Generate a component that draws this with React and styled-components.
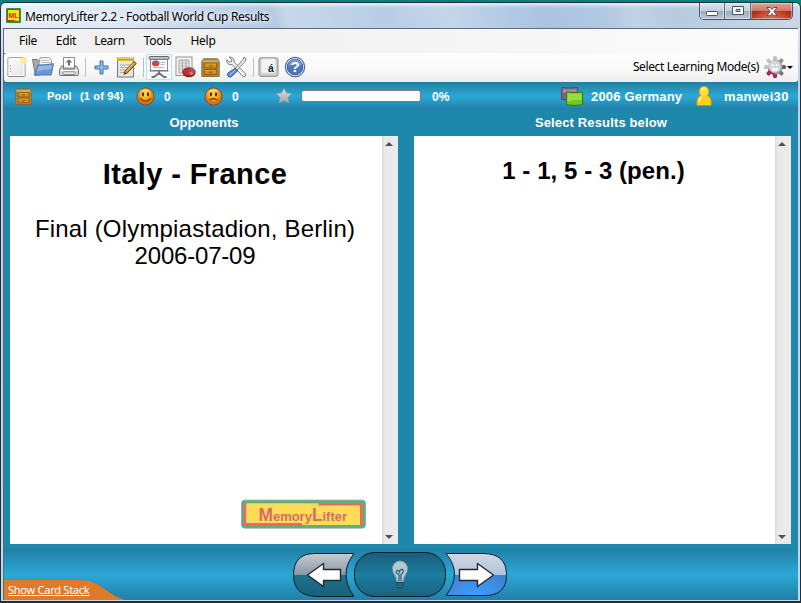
import React from "react";
import styled, { createGlobalStyle } from "styled-components";

const Global = createGlobalStyle`
  * { box-sizing: border-box; }
  html, body { margin: 0; padding: 0; width: 801px; height: 603px; overflow: hidden; background: #087872; }
  svg { display: block; flex: none; overflow: visible; }
`;

const Desktop = styled.div`
  width: 801px;
  height: 603px;
  padding-top: 2px;
  background: #08807b;
`;
const Frame = styled.div`
  width: 801px;
  height: 601px;
  display: flex;
  flex-direction: column;
  border: 1px solid #202f3a;
  border-top-width: 1px;
  border-bottom-width: 2px;
  border-radius: 6px 6px 0 0;
  padding: 0 2px 1px 2px;
  background: linear-gradient(#e8f0f8 0, #bed1e7 80px, #c2d7ea 100%);
  overflow: hidden;
`;
const TitleBar = styled.header`
  height: 25px;
  flex: none;
  display: flex;
  align-items: flex-start;
  margin: 0 -2px;
  padding-left: 5px;
  background:
    linear-gradient(rgba(255,255,255,.65) 0, rgba(255,255,255,0) 5px),
    linear-gradient(75deg, #e7eff8 0, #dce8f4 15%, #bed1e8 27%, #b3c9e3 34%, #c6d8ea 36%, #b8cde6 48%, #c3d5ea 56%, #a9c3e0 68%, #b1c8e2 75%, #bfd2e6 79%, #b7cbe1 84%, #cbd8e6 100%);
`;
const TitleIcon = styled.div`margin: 5px 4px 0 0;`;
const Title = styled.div`
  flex: 1;
  padding-top: 5px;
  font: 12px/17px "Noto Sans", "Open Sans", sans-serif;
  letter-spacing: ${(p) => p.$ls || 0}px;
  color: #000;
  white-space: nowrap;
  text-shadow: 0 0 5px #fff, 0 0 7px #fff;
`;
const CaptionButtons = styled.div`
  display: flex;
  height: 17px;
  margin-right: 7px;
  border: 1px solid #46566a;
  border-top: 0;
  border-radius: 0 0 5px 5px;
  overflow: hidden;
`;
const CaptionButton = styled.div`
  width: ${(p) => p.$w}px;
  display: flex;
  justify-content: center;
  padding-top: ${(p) => p.$top}px;
  border-right: ${(p) => (p.$danger ? "0" : "1px solid #56687d")};
  box-shadow: inset 0 0 0 1px rgba(255,255,255,.4);
  background: ${(p) =>
    p.$danger
      ? "radial-gradient(ellipse at 50% 110%, #df7653 0, transparent 65%), linear-gradient(#dfa398 0, #cc7768 47%, #ad2817 50%, #bd4328 100%)"
      : "linear-gradient(#dce4ed 0, #c2cfdd 47%, #9babbd 50%, #bac9d9 100%)"};
`;
const Client = styled.main`
  flex: 1;
  min-height: 0;
  display: flex;
  flex-direction: column;
  border: 1px solid #5e6b7c;
  border-bottom: 0;
  border-right: 0;
  background: #1d87ac;
`;
const MenuBar = styled.nav`
  height: 24px;
  flex: none;
  display: flex;
  background: linear-gradient(90deg, #f0f0f0, #f3f3f3 40%, #fcfcfc);
`;
const MenuItem = styled.div`
  width: ${(p) => p.$w}px;
  padding-top: 3px;
  font: 12px/17px "Noto Sans", "Open Sans", sans-serif;
  letter-spacing: -0.3px;
  text-align: center;
  color: #000;
`;
const ToolBar = styled.div`
  height: 29px;
  flex: none;
  display: flex;
  align-items: flex-start;
  background: linear-gradient(#fcfcfc 0, #f9f9f9 55%, #eeeeee 100%);
  border-radius: 3px 0 3px 3px;
`;
const Tool = styled.div`
  width: ${(p) => p.$w}px;
  height: 26px;
  margin: 1px 0 0 ${(p) => p.$gap || 0}px;
  display: flex;
  align-items: center;
  justify-content: center;
  flex: none;
  border: ${(p) => (p.$active ? "1px solid #b9e0f5" : "0")};
  background: ${(p) => (p.$active ? "#f5fafd" : "transparent")};
`;
const Separator = styled.div`
  width: 1px;
  height: 19px;
  margin: 5px 0 0 ${(p) => p.$gap}px;
  background: #bdbdbd;
`;
const ModeLabel = styled.div`
  margin-left: auto;
  padding-top: 5px;
  font: 12px/17px "Noto Sans", "Open Sans", sans-serif;
  letter-spacing: -0.38px;
  white-space: nowrap;
`;
const Caret = styled.div`
  margin: 13px 5px 0 1px;
  border: 3px solid transparent;
  border-top-color: #000;
  border-bottom: 0;
`;
const StatusBar = styled.div`
  height: 28px;
  flex: none;
  display: flex;
  align-items: center;
  background: linear-gradient(#237ea5 0, #2ba8d6 50%, #237fa7 100%);
`;
const StatusIcon = styled.div`
  width: ${(p) => p.$w}px;
  margin-left: ${(p) => p.$gap || 0}px;
  flex: none;
`;
const StatusText = styled.div`
  width: ${(p) => p.$w}px;
  margin-left: ${(p) => p.$gap || 0}px;
  padding-top: ${(p) => p.$drop || 0}px;
  flex: none;
  white-space: nowrap;
  color: #fff;
  font: bold ${(p) => p.$size || 12}px/16px "Liberation Sans", Arial, sans-serif;
  letter-spacing: ${(p) => p.$ls || 0}px;
`;
const Progress = styled.div`
  width: 120px;
  height: 12px;
  margin-left: 9px;
  border: 1px solid #7b7b7b;
  border-radius: 3px;
  background: #fff;
`;
const Spacer = styled.div`flex: 1;`;
const Cards = styled.section`
  flex: none;
  height: 434px;
  display: grid;
  grid-template-columns: 388px 377px;
  column-gap: 16px;
  padding-left: 6px;
`;
const Card = styled.article`
  display: flex;
  flex-direction: column;
`;
const CardHeader = styled.h2`
  height: 26px;
  margin: 0;
  padding-top: 4px;
  text-align: center;
  color: #fff;
  font: bold 13px/17px "Liberation Sans", Arial, sans-serif;
  letter-spacing: ${(p) => p.$ls || 0}px;
  padding-right: ${(p) => p.$shift || 0}px;
`;
const CardBody = styled.div`
  height: 408px;
  display: flex;
  background: #fff;
`;
const CardContent = styled.div`
  flex: 1;
  display: flex;
  flex-direction: column;
  align-items: center;
  padding-right: 2px;
  font-family: "Liberation Sans", Arial, sans-serif;
  color: #000;
`;
const Question = styled.div`
  margin-top: ${(p) => p.$top}px;
  font-weight: bold;
  font-size: ${(p) => p.$size}px;
  line-height: 34px;
  letter-spacing: ${(p) => p.$ls || 0}px;
  white-space: nowrap;
`;
const Detail = styled.div`
  margin-top: 24px;
  text-align: center;
`;
const DetailLine = styled.div`
  font-size: 24px;
  line-height: 27px;
  letter-spacing: ${(p) => p.$ls}px;
  white-space: nowrap;
`;
const LogoSlot = styled.div`
  margin: auto 14px 15px 0;
  align-self: flex-end;
`;
const ScrollTrack = styled.div`
  width: 16px;
  display: flex;
  flex-direction: column;
  justify-content: space-between;
  align-items: center;
  padding: 6px 2px 5px 0;
  background: linear-gradient(90deg, #dcdcdc 0, #e9e9e9 3px, #ebebeb 100%);
`;
const ScrollArrow = styled.div`
  border: 4px solid transparent;
  ${(p) => (p.$up ? "border-bottom-color: #505050; border-top: 0;" : "border-top-color: #505050; border-bottom: 0;")}
`;
const Footer = styled.footer`
  flex: 1;
  margin-top: 5px;
  display: grid;
  grid-template-columns: 289px 215px 1fr;
  background: linear-gradient(#237fa6 0, #2aa8d5 50%, #237fa7 100%);
`;
const StackTab = styled.div`
  align-self: end;
  width: 121px;
  height: 20px;
  display: flex;
  padding: 1px 0 0 4px;
  background: #e07a28;
  clip-path: polygon(0 0, 75px 0, 85px 1px, 93px 4px, 102px 10px, 111px 16px, 121px 20px, 0 20px);
`;
const StackLink = styled.a`
  color: #fff;
  text-decoration: underline;
  white-space: nowrap;
  letter-spacing: -0.25px;
  font: 11px/17px "Noto Sans", Tahoma, sans-serif;
`;

const MLIcon = () => (
  <svg width="15" height="15" viewBox="0 0 15 15">
    <rect width="15" height="15" rx="1" fill="#2a9c3c" />
    <rect x="1.3" y="1.3" width="12.4" height="12.4" fill="#cb2b16" />
    <path d="M2 2h11v11H8.5v-1H2z" fill="#ffe01c" />
    <text x="7.5" y="10.2" textAnchor="middle" textLength="10" fontSize="7" fontWeight="bold" fontFamily="Liberation Sans" fill="#d62d10">ML</text>
  </svg>
);
const NewIcon = () => (
  <svg width="20" height="20" viewBox="0 0 20 20">
    <defs><linearGradient id="paper" x2="1" y2="1"><stop stopColor="#fff" /><stop offset="1" stopColor="#e2e2e2" /></linearGradient></defs>
    <rect x="1" y=".8" width="17" height="18.7" rx="1" fill="url(#paper)" stroke="#858585" />
    <rect x="2" y="1.8" width="15" height="16.7" fill="none" stroke="#fff" />
    <path d="M3.5 8v1M3.5 11v1M3.5 14v1" stroke="#888" />
    <circle cx="16.5" cy="3.8" r="3.6" fill="#fff59b" opacity=".8" />
    <circle cx="16.5" cy="3.8" r="2" fill="#fffde0" stroke="#f0dc50" />
  </svg>
);
const OpenIcon = () => (
  <svg width="22" height="20" viewBox="0 0 22 20">
    <path d="M.5 2.5h5l1 2h9v12l-12 2z" fill="#a9a9a9" stroke="#777" />
    <path d="M8 .8l8.5-.3 3 2.5v9H6z" fill="#f8f8f8" stroke="#999" />
    <path d="M9 3.5h8M9 5.5h9" stroke="#bbb" />
    <path d="M6 8q8 0 15.5-1.3L19.2 18H2.2z" fill="#6f97cf" stroke="#4d79b5" />
    <path d="M6.5 9q7 0 13.7-1l-.8 4Q11 12 5 14.5z" fill="#a8c4e8" opacity=".7" />
  </svg>
);
const PrintIcon = () => (
  <svg width="20" height="20" viewBox="0 0 20 20">
    <path d="M4.5.5h11V11h-11z" fill="#fff" stroke="#8b8b8b" />
    <path d="M10 2.2L6.7 5.6H9v3h2v-3h2.3z" fill="#6c6c6c" />
    <path d="M2.5 9h2v3h11V9h2l2 4v4.5q0 1-1 1h-17q-1 0-1-1V13z" fill="#d7d7d7" stroke="#727272" />
    <path d="M1 13.5h18" stroke="#fff" />
    <rect x="4" y="14.8" width="12" height="2.7" rx="1" fill="#eee" stroke="#8b8b8b" />
  </svg>
);
const PlusIcon = () => (
  <svg width="15" height="15" viewBox="0 0 15 15">
    <path d="M6 1h3v5h5v3H9v5H6V9H1V6h5z" fill="#91b6e2" stroke="#3971b4" strokeLinejoin="round" />
  </svg>
);
const NoteIcon = () => (
  <svg width="21" height="21" viewBox="0 0 21 21">
    <rect x="1.5" y="2.5" width="16" height="17.5" fill="#e6e6e3" stroke="#777" />
    <path d="M4 8h11M4 10.5h9M4 13h7M4 15.5h6" stroke="#aaa" />
    <path d="M1 1.2h17" stroke="#dbb01a" strokeWidth="2.4" strokeDasharray="1.5 .8" />
    <path d="M1 3.3h17" stroke="#e2b62a" strokeWidth="1.6" />
    <path d="M18 4.5l2.3 2-9 9.5-3.3 1.4 1-3.3z" fill="#d69028" stroke="#6d471b" />
    <path d="M17.6 6l-7 8" stroke="#ffcd70" /><path d="M8 17.4l2-1-1-1z" fill="#222" />
  </svg>
);
const PresentIcon = () => (
  <svg width="22" height="24" viewBox="0 0 22 24">
    <rect x="2.5" y="3" width="17" height="12.5" fill="#fff" stroke="#888" />
    <rect x="1" y="1.5" width="20" height="2.8" rx="1" fill="#c6c6c6" stroke="#676767" />
    <ellipse cx="7.7" cy="8.4" rx="3.7" ry="2.8" fill="#d6403c" /><path d="M7.7 8.5V5.4q4 .3 3.7 3.1z" fill="#3b80c0" />
    <path d="M12.5 7.5h5M12.5 9.5h4M5 12.5h11" stroke="#b8b8b8" />
    <path d="M11 16v3M11 18l-5 4H3.5M11 18l5 4h2.5" stroke="#737373" strokeWidth="2" fill="none" />
    <path d="M1.5 16h19" stroke="#777" />
  </svg>
);
const ReportIcon = () => (
  <svg width="21" height="22" viewBox="0 0 21 22">
    <rect x="1" y="1" width="16" height="18.5" fill="#f8f8f8" stroke="#929292" />
    <rect x="4" y="4" width="10" height="13" fill="#e4e4e4" stroke="#a5a5a5" />
    <path d="M4 7h10M4 10h10M4 13h10" stroke="#c5c5c5" /><path d="M7.5 4v13M11 4v13" stroke="#a5a5a5" />
    <ellipse cx="14" cy="17.2" rx="6.3" ry="4" fill="#8f1c23" /><ellipse cx="14" cy="15.7" rx="6.3" ry="4" fill="#c92c30" stroke="#8f1c23" strokeWidth=".7" />
    <path d="M14.2 15.5l2.2-3.2q3.5 1 3.5 3.4z" fill="#5579a9" /><path d="M14.2 15.7l5.2 1.2q-1.5 2-4.2 2.2z" fill="#d98747" />
  </svg>
);
const DrawerIcon = ({ size = 19 }) => (
  <svg width={size} height={size} viewBox="0 0 19 19">
    <path d="M.8 18.4V3.2L2.6.8h13.8l1.8 2.4v15.2z" fill="#b08a47" stroke="#7f6431" strokeWidth=".9" />
    <path d="M1.5 3.2h16" stroke="#dabb7e" strokeWidth="1.3" />
    <path d="M3.3 5.2h12.4v4.8H3.3zM3.3 11.6h12.4v4.8H3.3z" fill="#dc8d12" stroke="#765117" strokeWidth=".8" />
    <path d="M4 6h11M4 12.4h11" stroke="#eba732" strokeWidth=".8" />
    <path d="M8 7.8h3M8 14.2h3" stroke="#7d5011" strokeWidth="1" />
  </svg>
);
const ToolsIcon = () => (
  <svg width="21" height="22" viewBox="0 0 21 22">
    <path d="M3 1l3 3-.6 1.7L3.5 6 .8 3.7Q.3 7 2.5 8.2q2 1 3.6.2l10 11.3q1.4 1.5 3 .5 1.4-1.4 0-2.8L8.3 6.5Q8.5 1 3 1z" fill="#f0f0f0" stroke="#777" />
    <path d="M18 1l2 2-1 2.5L11 14l-1.5-1.5L17 3.5z" fill="#efefef" stroke="#777" />
    <path d="M9 12.5l2.5 2.3-6 5.8q-1.6 1-3.3-.3-1.4-1.8-.2-3.3z" fill="#608ed0" stroke="#244f93" />
    <path d="M9.3 14l-5.8 5" stroke="#b5d2f3" />
  </svg>
);
const KeyIcon = () => (
  <svg width="21" height="20" viewBox="0 0 21 20">
    <rect x="1" y=".8" width="19" height="18.5" rx="2" fill="#cecece" stroke="#8b8b8b" />
    <rect x="3.5" y="2" width="14" height="14" rx="1.5" fill="#f3f3f1" stroke="#e2e2e2" />
    <text x="13" y="14.5" textAnchor="middle" fontSize="10.5" fontWeight="bold" fontFamily="Liberation Sans" fill="#222">á</text>
  </svg>
);
const HelpIcon = () => (
  <svg width="22" height="22" viewBox="0 0 22 22">
    <circle cx="11" cy="11" r="9.7" fill="#f5f8fd" stroke="#506f99" strokeWidth="1.2" />
    <circle cx="11" cy="11" r="7.8" fill="#4e78b8" stroke="#315c9d" />
    <path d="M4 10a7 7 0 0 1 14 0q-7-2-14 0z" fill="#83a7d7" opacity=".7" />
    <text x="11" y="16.2" textAnchor="middle" fontSize="15" fontWeight="bold" fontFamily="Liberation Sans" fill="#fff">?</text>
  </svg>
);
const gearTeeth = ["#c4c4c4", "#959595", "#5e5e5e", "#777", "#9e2761", "#9e2761", "#c0c0c0", "#c4c4c4"];
const ModeIcon = () => (
  <svg width="22" height="22" viewBox="0 0 22 22">
    {gearTeeth.map((fill, i) => (
      <rect key={i} x="9" y="0" width="4" height="5" rx="1.6" transform={`rotate(${i * 45} 11 11)`} fill={fill} />
    ))}
    <path d="M4 13l7-2v8q-5 0-7-6z" fill="#9e2761" /><path d="M11 3.5q7.5 1 7.5 7.5T11 18.5z" fill="#909090" />
    <circle cx="11" cy="10.6" r="6.2" fill="#d6d6d6" stroke="#bbb" />
    <circle cx="8.8" cy="9" r="1" fill="#fff" /><circle cx="13" cy="9" r="1" fill="#fff" />
    <path d="M7.5 12q3.5 1.4 7 0-1 3-3.5 3T7.5 12z" fill="#fff" />
  </svg>
);
const Face = ({ sad }) => (
  <svg width="19" height="19" viewBox="0 0 19 19">
    <defs><radialGradient id={sad ? "sadFace" : "happyFace"} cx="48%" cy="36%">
      <stop offset="0" stopColor="#ffd94a" /><stop offset=".55" stopColor="#fbab22" /><stop offset="1" stopColor="#d8730c" />
    </radialGradient></defs>
    <circle cx="9.5" cy="9.5" r="8.6" fill={`url(#${sad ? "sadFace" : "happyFace"})`} stroke="#7a421a" strokeWidth=".8" />
    <path d="M3.5 5.5q6-6.5 12 0-6-2.5-12 0z" fill="#fff2a6" opacity=".7" />
    <ellipse cx="7" cy="7.3" rx="1" ry="2.1" fill="#3c2308" /><ellipse cx="12" cy="7.3" rx="1" ry="2.1" fill="#3c2308" />
    <path d={sad ? "M5.5 13q4-2.8 8 0" : "M4.3 11.3q5.2 5.4 10.4 0"} fill="none" stroke="#542905" strokeWidth="1.2" />
  </svg>
);
const StarIcon = () => (
  <svg width="16" height="16" viewBox="0 0 16 16">
    <defs><linearGradient id="star" y2="1" x2="0"><stop stopColor="#e0e0e0" /><stop offset="1" stopColor="#a4a4a4" /></linearGradient></defs>
    <path d="M8 .5l2.4 4.6 5.1.6-3.7 3.8 1.1 5.6L8 12.7l-4.9 2.4 1.1-5.6L.5 5.7l5.1-.6z" fill="url(#star)" stroke="#a0a0a0" strokeWidth=".5" />
  </svg>
);
const DeckIcon = () => (
  <svg width="22" height="20" viewBox="0 0 22 20">
    <path d="M.7 1.5q8 1 16 0v12q-8 1-16 0z" fill="#806380" stroke="#574964" />
    <path d="M2 2.7q7 1 13.5 0v3q-7 1-13.5 1z" fill="#a58ba2" />
    <path d="M5.5 6q7 1 16 0v12.8q-8 1-16 0z" fill="#6fcd1f" stroke="#397711" />
    <path d="M6.5 7.2q7 1 14 0V14q-7-1-14 2z" fill="#96df43" />
  </svg>
);
const UserIcon = () => (
  <svg width="16" height="20" viewBox="0 0 16 20">
    <path d="M.8 17.3q-.2-6 3.9-8.3h6.6q4.1 2.3 3.9 8.3v1.2q0 1-1 1H1.8q-1 0-1-1z" fill="#ffd018" stroke="#d78b00" />
    <ellipse cx="8" cy="5.5" rx="4.8" ry="5.1" fill="#ffe23b" stroke="#e29c05" />
    <path d="M4.8 9.2h6.4v1.6H4.8z" fill="#ffd424" />
    <path d="M5.8 4q1-3 4.2-1.2M3 16q.5-4 3-5" stroke="#fff4a0" strokeWidth="1.5" fill="none" />
  </svg>
);
const BrandLogo = () => (
  <svg width="125" height="29" viewBox="0 0 125 29">
    <rect x=".7" y=".2" width="123.6" height="27.9" rx="3" fill="#54b37d" stroke="#80a48c" />
    <rect x="3" y="3.3" width="118.3" height="21.7" fill="#ffdc58" />
    <path d="M3.9 3v21.2h57M77.5 4.2h42.8V26" fill="none" stroke="#ed6666" strokeWidth="2.6" strokeLinejoin="round" />
    <text x="17.5" y="20.8" textLength="88.5" lengthAdjust="spacingAndGlyphs" fontFamily="Liberation Sans" fontWeight="bold" fill="#d96c68" fontSize="13.5">
      <tspan fontSize="18">M</tspan>emory<tspan fontSize="18">L</tspan>ifter
    </text>
  </svg>
);
const Navigation = () => (
  <svg width="215" height="51" viewBox="0 0 215 51">
    <defs>
      <linearGradient id="prev" x2="0" y2="1"><stop stopColor="#c5ccd4" /><stop offset=".5" stopColor="#8798a3" /><stop offset=".51" stopColor="#1d718e" /><stop offset="1" stopColor="#18617b" /></linearGradient>
      <linearGradient id="next" x2="0" y2="1"><stop stopColor="#d1d6df" /><stop offset=".5" stopColor="#afc5e1" /><stop offset=".51" stopColor="#418ce2" stopOpacity="0" /><stop offset="1" stopColor="#3994ee" stopOpacity="0" /></linearGradient>
      <radialGradient id="glow" cx=".5" cy="1" r=".6"><stop stopColor="#3f9cff" /><stop offset="1" stopColor="#3f83d0" /></radialGradient>
      <linearGradient id="mid" x2="0" y2="1"><stop stopColor="#195d7a" /><stop offset=".5" stopColor="#1b7c9f" /><stop offset="1" stopColor="#196380" /></linearGradient>
    </defs>
    <path d="M22 4.5h39Q45 25 61 47.5H25Q.5 47.5.5 26T22 4.5z" fill="url(#prev)" stroke="#101b24" />
    <rect x="61.5" y="3.5" width="91" height="44" rx="20" fill="url(#mid)" stroke="#071e2b" />
    <path d="M153 4.5h37q23.5 0 23.5 21.5T190 46.5h-37q17-22 0-42z" fill="url(#glow)" />
    <path d="M153 4.5h37q23.5 0 23.5 21.5T190 46.5h-37q17-22 0-42z" fill="url(#next)" stroke="#14212e" />
    <path d="M14.5 26l16-11.5v6h17v11h-17v6z" fill="#fff" stroke="#272727" strokeWidth="1.4" strokeLinejoin="round" />
    <path d="M200.5 26l-16-11.5v6h-18v11h18v6z" fill="#fff" stroke="#272727" strokeWidth="1.4" strokeLinejoin="round" />
    <path d="M99.5 19.5a7.5 7.5 0 1 1 15 0q0 4-2.5 7-1.5 2-1.5 6h-7q0-4-1.5-6-2.5-3-2.5-7z" fill="#b6c8d1" stroke="#839ea9" strokeWidth=".6" />
    <path d="M106 32v-6.5q-3.5-1-2.7-3.2 1.7-2 3.2.7.5-3 2.8-2.7 2.7 2-1.3 5.2V32" stroke="#1a6079" fill="none" strokeWidth="1.2" />
    <path d="M103 33h8v5l-2 1.5h-4L103 38z" fill="#194f64" /><path d="M103.5 35h7M103.5 37.3h7" stroke="#55879a" strokeWidth=".7" />
  </svg>
);
const MinGlyph = () => <svg width="12" height="5"><rect x=".5" y=".5" width="11" height="4" rx="1" fill="#fff" stroke="#4b5360" /></svg>;
const MaxGlyph = () => <svg width="12" height="10"><path fillRule="evenodd" d="M.5.5h11v8H.5zM4 3.5h4v2H4z" fill="#fff" stroke="#4b5360" /></svg>;
const CloseGlyph = () => <svg width="12" height="10"><path d="M1 .5h3.2L6 2.5 7.8.5H11L7.8 4.5 11 8.7H7.8L6 6.5 4.2 8.7H1l3.2-4.2z" fill="#fff" stroke="#5a3f47" strokeWidth=".9" /></svg>;

const Scrollbar = () => (
  <ScrollTrack>
    <ScrollArrow $up />
    <ScrollArrow />
  </ScrollTrack>
);

export default function App() {
  return (
    <Desktop>
      <Global />
      <Frame>
        <TitleBar>
          <TitleIcon><MLIcon /></TitleIcon>
          <Title $ls={-0.31}>MemoryLifter 2.2 - Football World Cup Results</Title>
          <CaptionButtons>
            <CaptionButton $w={25} $top={8}><MinGlyph /></CaptionButton>
            <CaptionButton $w={26} $top={3}><MaxGlyph /></CaptionButton>
            <CaptionButton $w={41} $top={4} $danger><CloseGlyph /></CaptionButton>
          </CaptionButtons>
        </TitleBar>
        <Client>
          <MenuBar>
            <MenuItem $w={48}>File</MenuItem>
            <MenuItem $w={28}>Edit</MenuItem>
            <MenuItem $w={59}>Learn</MenuItem>
            <MenuItem $w={37}>Tools</MenuItem>
            <MenuItem $w={54}>Help</MenuItem>
          </MenuBar>
          <ToolBar>
            <Tool $w={20} $gap={3}><NewIcon /></Tool>
            <Tool $w={22} $gap={5}><OpenIcon /></Tool>
            <Tool $w={20} $gap={5}><PrintIcon /></Tool>
            <Separator $gap={6} />
            <Tool $w={15} $gap={8}><PlusIcon /></Tool>
            <Tool $w={21} $gap={7}><NoteIcon /></Tool>
            <Separator $gap={6} />
            <Tool $w={26} $gap={2} $active><PresentIcon /></Tool>
            <Tool $w={21} $gap={3}><ReportIcon /></Tool>
            <Tool $w={19} $gap={5}><DrawerIcon /></Tool>
            <Tool $w={21} $gap={6}><ToolsIcon /></Tool>
            <Separator $gap={6} />
            <Tool $w={21} $gap={4}><KeyIcon /></Tool>
            <Tool $w={22} $gap={5}><HelpIcon /></Tool>
            <ModeLabel>Select Learning Mode(s)</ModeLabel>
            <Tool $w={22} $gap={5}><ModeIcon /></Tool>
            <Caret />
          </ToolBar>
          <StatusBar>
            <StatusIcon $w={17} $gap={11}><DrawerIcon size={17} /></StatusIcon>
            <StatusText $size={11} $ls={0.2} $w={33} $gap={15}>Pool</StatusText>
            <StatusText $size={11} $ls={0.16} $w={44}>(1 of 94)</StatusText>
            <StatusIcon $w={19} $gap={12}><Face /></StatusIcon>
            <StatusText $w={10} $gap={9} $drop={1}>0</StatusText>
            <StatusIcon $w={19} $gap={30}><Face sad /></StatusIcon>
            <StatusText $w={10} $gap={9} $drop={1}>0</StatusText>
            <StatusIcon $w={16} $gap={34}><StarIcon /></StatusIcon>
            <Progress />
            <StatusText $w={22} $gap={11} $drop={1}>0%</StatusText>
            <Spacer />
            <StatusIcon $w={22}><DeckIcon /></StatusIcon>
            <StatusText $size={13} $ls={0.2} $w={92} $gap={8} $drop={1}>2006 Germany</StatusText>
            <StatusIcon $w={16} $gap={13}><UserIcon /></StatusIcon>
            <StatusText $size={13} $ls={0.32} $w={74} $gap={12} $drop={1}>manwei30</StatusText>
          </StatusBar>
          <Cards>
            <Card>
              <CardHeader $ls={0.06}>Opponents</CardHeader>
              <CardBody>
                <CardContent>
                  <Question $top={21} $size={29} $ls={0.4}>Italy - France</Question>
                  <Detail>
                    <DetailLine $ls={0.18}>Final (Olympiastadion, Berlin)</DetailLine>
                    <DetailLine $ls={-0.2}>2006-07-09</DetailLine>
                  </Detail>
                  <LogoSlot><BrandLogo /></LogoSlot>
                </CardContent>
                <Scrollbar />
              </CardBody>
            </Card>
            <Card>
              <CardHeader $ls={0.14} $shift={3}>Select Results below</CardHeader>
              <CardBody>
                <CardContent>
                  <Question $top={18} $size={24} $ls={0.06}>1 - 1, 5 - 3 (pen.)</Question>
                </CardContent>
                <Scrollbar />
              </CardBody>
            </Card>
          </Cards>
          <Footer>
            <StackTab><StackLink>Show Card Stack</StackLink></StackTab>
            <Navigation />
          </Footer>
        </Client>
      </Frame>
    </Desktop>
  );
}
